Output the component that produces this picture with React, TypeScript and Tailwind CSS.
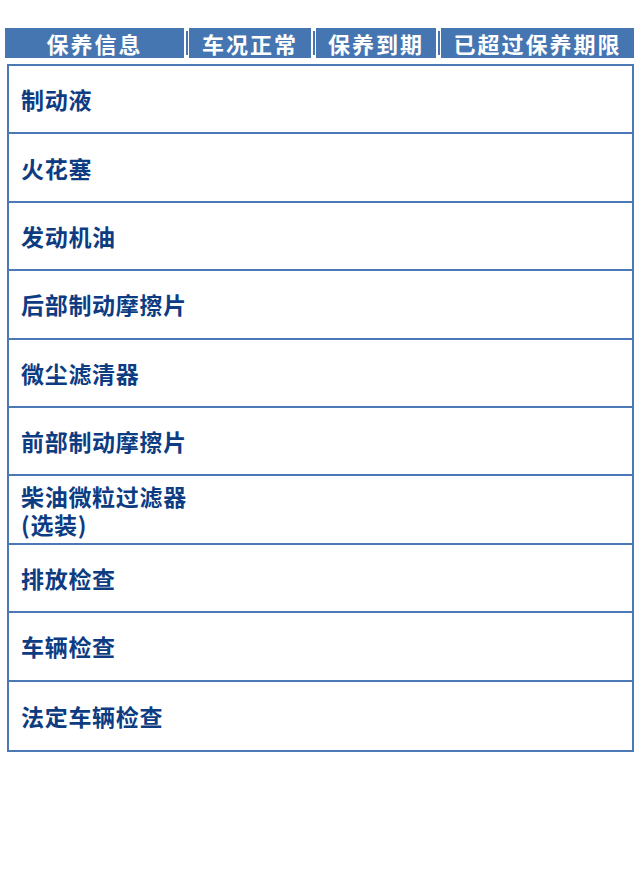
import React from "react";

const TABS: Array<{ label: string; width: string }> = [
  { label: "保养信息", width: "w-[179px]" },
  { label: "车况正常", width: "w-[122px]" },
  { label: "保养到期", width: "w-[120px]" },
  { label: "已超过保养期限", width: "w-[193px]" },
];

const ITEMS: string[][] = [
  ["制动液"],
  ["火花塞"],
  ["发动机油"],
  ["后部制动摩擦片"],
  ["微尘滤清器"],
  ["前部制动摩擦片"],
  ["柴油微粒过滤器", "(选装)"],
  ["排放检查"],
  ["车辆检查"],
  ["法定车辆检查"],
];

export default function App() {
  return (
    <div
      className="w-[640px] h-[881px] bg-white"
      style={{ fontFamily: '"Noto Sans CJK SC", "Noto Sans", sans-serif' }}
    >
      {/* Legend bar */}
      <div className="flex items-start pt-[28px] pl-[5px]">
        {TABS.map((tab, i) => (
          <React.Fragment key={tab.label}>
            {i > 0 && (
              <div className="w-[5px] h-[30px] flex justify-center pt-[3px]">
                <div className="w-[2px] h-[24px] bg-[#4676b2]" />
              </div>
            )}
            <div
              className={`${tab.width} h-[30px] bg-[#4676b2] text-white font-bold text-[22px] leading-[30px] tracking-[2px] text-center`}
            >
              {tab.label}
            </div>
          </React.Fragment>
        ))}
      </div>

      {/* Items table */}
      <div className="ml-[7px] mt-[6px] w-[627px] border-2 border-[#4a79b6]">
        {ITEMS.map((lines, i) => (
          <div
            key={i}
            className={`h-[68.4px] flex flex-col justify-center pl-[12px] text-[#0d3c83] font-bold text-[23px] leading-[28px] tracking-[0.7px] ${
              i < ITEMS.length - 1 ? "border-b-2 border-[#4a79b6]" : ""
            }`}
          >
            {lines.map((l) => (
              <div key={l}>{l}</div>
            ))}
          </div>
        ))}
      </div>
    </div>
  );
}
